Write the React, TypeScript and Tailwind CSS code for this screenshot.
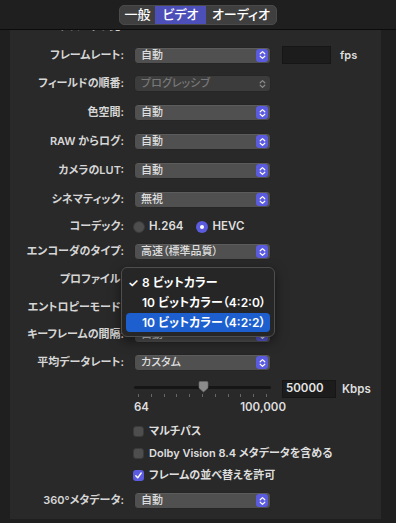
import React from "react";

const FONT = "font-['Inter','Noto_Sans_CJK_JP',sans-serif] [font-feature-settings:'palt']";

function Stepper({ disabled }: { disabled?: boolean }) {
  return (
    <div
      className={
        "w-[12px] h-[13px] rounded-[3px] flex items-center justify-center " +
        (disabled ? "" : "bg-[#5b5be0]")
      }
    >
      <svg width="7" height="10" viewBox="0 0 7 10" fill="none">
        <path
          d="M1.2 3.8 L3.5 1.6 L5.8 3.8 M1.2 6.2 L3.5 8.4 L5.8 6.2"
          stroke={disabled ? "#8a8a8a" : "#ffffff"}
          strokeWidth="1.2"
          strokeLinecap="round"
          strokeLinejoin="round"
        />
      </svg>
    </div>
  );
}

function Popup({ value, disabled }: { value: string; disabled?: boolean }) {
  return (
    <div
      className={
        "w-[137px] h-[17px] rounded-[4px] flex items-center justify-between pl-[6px] pr-[2px] border border-[#262626] " +
        (disabled ? "bg-[#3c3c3c] text-[#777]" : "bg-[#505050] text-[#dedede] shadow-[inset_0_1px_0_#5c5c5c]")
      }
    >
      <span className="text-[11px] font-medium leading-none">{value}</span>
      <Stepper disabled={disabled} />
    </div>
  );
}

function Row({ label, h, children }: { label?: string; h: string; children?: React.ReactNode }) {
  return (
    <div className={"grid grid-cols-[114px_1fr] gap-x-[10px] items-center " + h}>
      <div className="text-right text-[11px] font-semibold text-[#d6d6d6] whitespace-nowrap">{label}</div>
      <div className="flex items-center">{children}</div>
    </div>
  );
}

function Check({ checked, label }: { checked?: boolean; label: string }) {
  return (
    <div className="flex items-center gap-[5px]">
      <div
        className={
          "w-[11px] h-[11px] rounded-[3px] flex items-center justify-center " +
          (checked ? "bg-[#5b5be0]" : "bg-[#4e4e4e] border border-[#3a3a3a]")
        }
      >
        {checked && (
          <svg width="9" height="9" viewBox="0 0 9 9" fill="none">
            <path d="M1.8 4.8 L3.7 6.8 L7.2 2" stroke="#fff" strokeWidth="1.4" strokeLinecap="round" strokeLinejoin="round" />
          </svg>
        )}
      </div>
      <span className="text-[11px] font-semibold text-[#dedede] whitespace-nowrap">{label}</span>
    </div>
  );
}

function Radio({ on, label }: { on?: boolean; label: string }) {
  return (
    <div className="flex items-center gap-[4px]">
      <div
        className={
          "w-[12px] h-[12px] rounded-full flex items-center justify-center " +
          (on ? "bg-[#5b5be0]" : "bg-[#4e4e4e] border border-[#3a3a3a]")
        }
      >
        {on && <div className="w-[4px] h-[4px] rounded-full bg-white" />}
      </div>
      <span className="text-[11.5px] font-semibold text-[#dedede]">{label}</span>
    </div>
  );
}

export default function App() {
  const ticks = Array.from({ length: 11 });
  return (
    <div className={"w-[396px] h-[523px] bg-[#1f1f1f] overflow-hidden " + FONT}>
      {/* Tabs */}
      <div className="h-[30px] flex justify-center pt-[5px] border-b border-[#0c0c0c]">
        <div className="h-[20px] flex rounded-[5px] bg-[#3f3f3f] border border-[#4a4a4a] overflow-hidden text-[13px] font-medium text-white">
          <div className="w-[35px] flex items-center justify-center">一般</div>
          <div className="w-[51px] flex items-center justify-center bg-[#4d4fb8]">ビデオ</div>
          <div className="w-[70px] flex items-center justify-center">オーディオ</div>
        </div>
      </div>

      {/* Panel */}
      <div className="ml-[10px] w-[371px] h-[489px] bg-[#292929] overflow-hidden relative">
        <div className="-mt-[18px]">
          <Row label="アスペクト比:" h="h-[29px]" />
          <Row label="フレームレート:" h="h-[28px]">
            <Popup value="自動" />
            <div className="ml-[11px] w-[49px] h-[18px] bg-[#1c1c1c] border border-[#161616]" />
            <span className="ml-[9px] text-[11px] font-semibold text-[#dedede]">fps</span>
          </Row>
          <Row label="フィールドの順番:" h="h-[29px]">
            <Popup value="プログレッシブ" disabled />
          </Row>
          <Row label="色空間:" h="h-[29px]">
            <Popup value="自動" />
          </Row>
          <Row label="RAW からログ:" h="h-[29px]">
            <Popup value="自動" />
          </Row>
          <Row label="カメラのLUT:" h="h-[29px]">
            <Popup value="自動" />
          </Row>
          <Row label="シネマティック:" h="h-[29px]">
            <Popup value="無視" />
          </Row>
          <Row label="コーデック:" h="h-[25px]">
            <div className="-ml-[1px] flex items-center gap-[13px]">
              <Radio label="H.264" />
              <Radio on label="HEVC" />
            </div>
          </Row>
          <Row label="エンコーダのタイプ:" h="h-[25px]">
            <Popup value="高速（標準品質）" />
          </Row>
          <Row label="プロファイル:" h="h-[30px]">
            <Popup value="" />
          </Row>
          <Row label="エントロピーモード:" h="h-[27px]">
            <Popup value="" />
          </Row>
          <Row label="キーフレームの間隔:" h="h-[27px]">
            <Popup value="自動" />
          </Row>
          <Row label="平均データレート:" h="h-[29px]">
            <Popup value="カスタム" />
          </Row>

          {/* Slider */}
          <div className="grid grid-cols-[114px_1fr] gap-x-[10px] h-[43px]">
            <div />
            <div className="flex items-start pt-[3px]">
              <div className="w-[137px] flex flex-col">
                <div className="relative h-[14px] flex items-center">
                  <div className="w-full h-[3px] rounded-full bg-[#161616]" />
                  <svg className="absolute left-[64px] top-[1px]" width="11" height="12" viewBox="0 0 11 12">
                    <path d="M1 1.5 Q1 0.5 2 0.5 H9 Q10 0.5 10 1.5 V7 L5.5 11 L1 7 Z" fill="#8c8c8c" stroke="#6a6a6a" strokeWidth="0.6" />
                  </svg>
                </div>
                <div className="flex justify-between px-[4px] h-[4px]">
                  {ticks.map((_, i) => (
                    <div key={i} className="w-[1px] h-[3px] bg-[#666]" />
                  ))}
                </div>
                <div className="flex justify-between text-[11.5px] font-semibold text-[#dedede] mt-[2px] w-[152px] leading-[14px]">
                  <span>64</span>
                  <span>100,000</span>
                </div>
              </div>
              <div className="ml-[11px] w-[54px] h-[18px] bg-[#1c1c1c] border border-[#161616] flex items-center pl-[3px] text-[11.5px] font-semibold text-[#e6e6e6]">
                50000
              </div>
              <span className="ml-[6px] mt-[1px] text-[11.5px] font-semibold text-[#dedede]">Kbps</span>
            </div>
          </div>

          <div className="pl-[123px] flex flex-col">
            <div className="h-[22px] flex items-center">
              <Check label="マルチパス" />
            </div>
            <div className="h-[22px] flex items-center">
              <Check label="Dolby Vision 8.4 メタデータを含める" />
            </div>
            <div className="h-[22px] flex items-center">
              <Check checked label="フレームの並べ替えを許可" />
            </div>
          </div>
          <Row label="360°メタデータ:" h="h-[29px]">
            <Popup value="自動" />
          </Row>
        </div>

        {/* Open popup menu */}
        <div className="absolute left-[111px] top-[237px] w-[154px] h-[70px] rounded-[6px] bg-[#262626] border border-[#4e4e4e] shadow-[0_4px_12px_rgba(0,0,0,0.5)] px-[4px] pt-[5px]">
          <div className="h-[20px] flex items-center text-[12px] font-semibold text-white">
            <span className="w-[12px] pl-[2px]">✓</span>
            <span className="ml-[4px]">8 ビットカラー</span>
          </div>
          <div className="h-[20px] flex items-center text-[12px] font-semibold text-white">
            <span className="ml-[16px]">10 ビットカラー（4:2:0）</span>
          </div>
          <div className="h-[19px] flex items-center rounded-[4px] bg-[#1d5fcf] text-[12px] font-semibold text-white">
            <span className="ml-[16px]">10 ビットカラー（4:2:2）</span>
          </div>
        </div>
      </div>
    </div>
  );
}
